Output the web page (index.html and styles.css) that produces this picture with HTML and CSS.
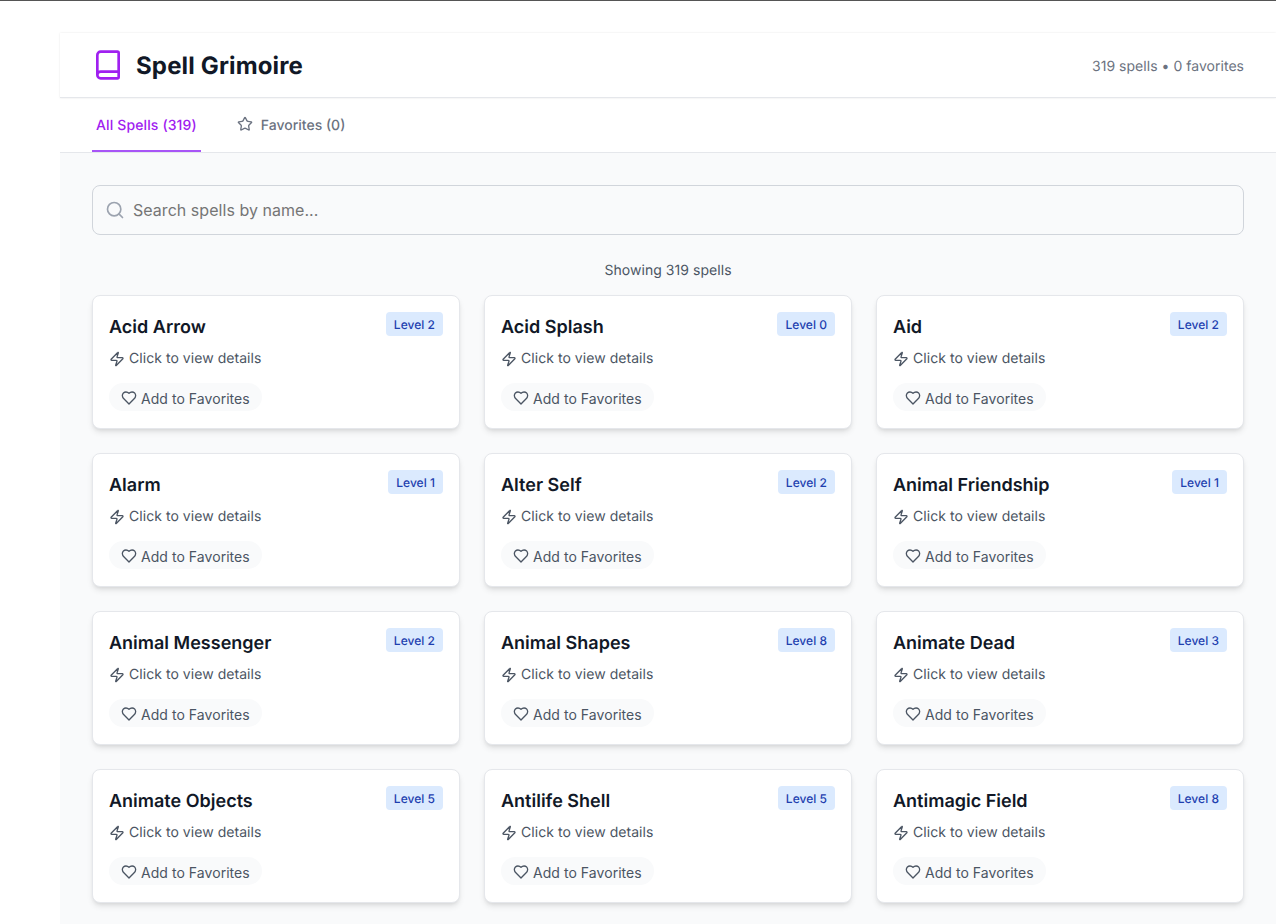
FILE: index.html
```html
<!DOCTYPE html>
<html lang="en">
<head>
    <meta charset="UTF-8">
    <meta name="viewport" content="width=device-width, initial-scale=1.0">
    <title>Spell Grimoire</title>
    <link rel="stylesheet" href="styles.css">
</head>
<body>
    <svg class="icon-defs" width="0" height="0" aria-hidden="true">
        <symbol id="i-zap" viewBox="0 0 24 24"><path d="M4 14a1 1 0 0 1-.78-1.63l9.9-10.2a.5.5 0 0 1 .86.46l-1.92 6.02A1 1 0 0 0 13 10h7a1 1 0 0 1 .78 1.63l-9.9 10.2a.5.5 0 0 1-.86-.46l1.92-6.02A1 1 0 0 0 11 14z"/></symbol>
        <symbol id="i-heart" viewBox="0 0 24 24"><path d="M19 14c1.49-1.46 3-3.21 3-5.5A5.5 5.5 0 0 0 16.5 3c-1.76 0-3 .5-4.5 2-1.5-1.5-2.74-2-4.5-2A5.5 5.5 0 0 0 2 8.5c0 2.3 1.5 4.05 3 5.5l7 7Z"/></symbol>
    </svg>

    <div class="app">
        <header class="header">
            <div class="brand">
                <svg class="book-icon" viewBox="0 0 24 24"><path d="M4 19.5v-15A2.5 2.5 0 0 1 6.5 2H19a1 1 0 0 1 1 1v18a1 1 0 0 1-1 1H6.5a1 1 0 0 1 0-5H20"/></svg>
                <h1>Spell Grimoire</h1>
            </div>
            <p class="stats">319 spells • 0 favorites</p>
        </header>

        <nav class="tabs">
            <a class="tab active">All Spells (319)</a>
            <a class="tab">
                <svg class="tab-icon" viewBox="0 0 24 24"><path d="M11.525 2.295a.53.53 0 0 1 .95 0l2.31 4.679a2.123 2.123 0 0 0 1.595 1.16l5.166.756a.53.53 0 0 1 .294.904l-3.736 3.638a2.123 2.123 0 0 0-.611 1.878l.882 5.14a.53.53 0 0 1-.771.56l-4.618-2.428a2.122 2.122 0 0 0-1.973 0L6.396 21.01a.53.53 0 0 1-.77-.56l.881-5.139a2.122 2.122 0 0 0-.611-1.879L2.16 9.795a.53.53 0 0 1 .294-.906l5.165-.755a2.122 2.122 0 0 0 1.597-1.16z"/></svg>
                Favorites (0)
            </a>
        </nav>

        <main class="content">
            <div class="search">
                <svg class="search-icon" viewBox="0 0 24 24"><circle cx="11" cy="11" r="8"/><path d="m21 21-4.3-4.3"/></svg>
                <input type="text" placeholder="Search spells by name...">
            </div>
            <p class="showing">Showing 319 spells</p>

            <div class="grid">
                <div class="card">
                    <div class="card-top"><h3>Acid Arrow</h3><span class="level">Level 2</span></div>
                    <p class="hint"><svg class="small-icon"><use href="#i-zap"/></svg>Click to view details</p>
                    <button class="fav"><svg class="small-icon"><use href="#i-heart"/></svg>Add to Favorites</button>
                </div>
                <div class="card">
                    <div class="card-top"><h3>Acid Splash</h3><span class="level">Level 0</span></div>
                    <p class="hint"><svg class="small-icon"><use href="#i-zap"/></svg>Click to view details</p>
                    <button class="fav"><svg class="small-icon"><use href="#i-heart"/></svg>Add to Favorites</button>
                </div>
                <div class="card">
                    <div class="card-top"><h3>Aid</h3><span class="level">Level 2</span></div>
                    <p class="hint"><svg class="small-icon"><use href="#i-zap"/></svg>Click to view details</p>
                    <button class="fav"><svg class="small-icon"><use href="#i-heart"/></svg>Add to Favorites</button>
                </div>
                <div class="card">
                    <div class="card-top"><h3>Alarm</h3><span class="level">Level 1</span></div>
                    <p class="hint"><svg class="small-icon"><use href="#i-zap"/></svg>Click to view details</p>
                    <button class="fav"><svg class="small-icon"><use href="#i-heart"/></svg>Add to Favorites</button>
                </div>
                <div class="card">
                    <div class="card-top"><h3>Alter Self</h3><span class="level">Level 2</span></div>
                    <p class="hint"><svg class="small-icon"><use href="#i-zap"/></svg>Click to view details</p>
                    <button class="fav"><svg class="small-icon"><use href="#i-heart"/></svg>Add to Favorites</button>
                </div>
                <div class="card">
                    <div class="card-top"><h3>Animal Friendship</h3><span class="level">Level 1</span></div>
                    <p class="hint"><svg class="small-icon"><use href="#i-zap"/></svg>Click to view details</p>
                    <button class="fav"><svg class="small-icon"><use href="#i-heart"/></svg>Add to Favorites</button>
                </div>
                <div class="card">
                    <div class="card-top"><h3>Animal Messenger</h3><span class="level">Level 2</span></div>
                    <p class="hint"><svg class="small-icon"><use href="#i-zap"/></svg>Click to view details</p>
                    <button class="fav"><svg class="small-icon"><use href="#i-heart"/></svg>Add to Favorites</button>
                </div>
                <div class="card">
                    <div class="card-top"><h3>Animal Shapes</h3><span class="level">Level 8</span></div>
                    <p class="hint"><svg class="small-icon"><use href="#i-zap"/></svg>Click to view details</p>
                    <button class="fav"><svg class="small-icon"><use href="#i-heart"/></svg>Add to Favorites</button>
                </div>
                <div class="card">
                    <div class="card-top"><h3>Animate Dead</h3><span class="level">Level 3</span></div>
                    <p class="hint"><svg class="small-icon"><use href="#i-zap"/></svg>Click to view details</p>
                    <button class="fav"><svg class="small-icon"><use href="#i-heart"/></svg>Add to Favorites</button>
                </div>
                <div class="card">
                    <div class="card-top"><h3>Animate Objects</h3><span class="level">Level 5</span></div>
                    <p class="hint"><svg class="small-icon"><use href="#i-zap"/></svg>Click to view details</p>
                    <button class="fav"><svg class="small-icon"><use href="#i-heart"/></svg>Add to Favorites</button>
                </div>
                <div class="card">
                    <div class="card-top"><h3>Antilife Shell</h3><span class="level">Level 5</span></div>
                    <p class="hint"><svg class="small-icon"><use href="#i-zap"/></svg>Click to view details</p>
                    <button class="fav"><svg class="small-icon"><use href="#i-heart"/></svg>Add to Favorites</button>
                </div>
                <div class="card">
                    <div class="card-top"><h3>Antimagic Field</h3><span class="level">Level 8</span></div>
                    <p class="hint"><svg class="small-icon"><use href="#i-zap"/></svg>Click to view details</p>
                    <button class="fav"><svg class="small-icon"><use href="#i-heart"/></svg>Add to Favorites</button>
                </div>
            </div>
        </main>
    </div>
</body>
</html>
```

FILE: styles.css
```css
html, body {
    height: 100%;
}
body {
    margin: 0;
    background: #fff;
    border-top: 1px solid #555;
    box-sizing: border-box;
    overflow: hidden;
    font-family: Inter, "Liberation Sans", sans-serif;
    color: #111827;
    text-rendering: geometricPrecision;
}
h1, h3, p {
    margin: 0;
}
svg {
    fill: none;
    stroke: currentColor;
    stroke-width: 2;
    stroke-linecap: round;
    stroke-linejoin: round;
    flex-shrink: 0;
}
.icon-defs {
    position: absolute;
}
.app {
    margin-left: 60px;
    padding-top: 32px;
    height: 100%;
    box-sizing: border-box;
    display: flex;
    flex-direction: column;
}
.header {
    flex-shrink: 0;
    height: 64px;
    padding: 0 32px;
    display: flex;
    align-items: center;
    justify-content: space-between;
    border-bottom: 1px solid #e5e7eb;
    box-shadow: 0 0 2px rgba(0,0,0,0.1);
}
.brand {
    display: flex;
    align-items: center;
    gap: 12px;
}
.book-icon {
    width: 32px;
    height: 32px;
    color: #a020f0;
}
h1 {
    padding-top: 2px;
    font-size: 24px;
    line-height: 32px;
    font-weight: 700;
    letter-spacing: 0.15px;
}
.stats {
    padding-top: 4px;
    font-size: 14px;
    line-height: 20px;
    letter-spacing: 0.03px;
    color: #6b7280;
}
.tabs {
    flex-shrink: 0;
    height: 54px;
    padding: 0 32px;
    display: flex;
    gap: 32px;
    border-bottom: 1px solid #e5e7eb;
}
.tab {
    display: flex;
    align-items: center;
    gap: 8px;
    padding: 2px 4px 0;
    font-size: 14px;
    font-weight: 500;
    color: #6b7280;
    border-bottom: 2px solid transparent;
}
.tab.active {
    letter-spacing: 0.13px;
    color: #a020f0;
    border-bottom-color: #a855f7;
}
.tab-icon {
    width: 16px;
    height: 16px;
    margin-top: -2px;
}
.content {
    flex: 1;
    background: #f9fafb;
    padding: 32px;
}
.search {
    height: 50px;
    box-sizing: border-box;
    display: flex;
    align-items: center;
    gap: 8px;
    padding: 0 12px;
    border: 1px solid #d1d5db;
    border-radius: 8px;
}
.search-icon {
    width: 20px;
    height: 20px;
    color: #9ca3af;
}
.search input {
    flex: 1;
    border: none;
    outline: none;
    padding: 1px 0;
    background: transparent;
    font-family: inherit;
    font-size: 16px;
    letter-spacing: 0.04px;
    color: #111827;
}
.search input::placeholder {
    color: #757575;
}
.showing {
    margin: 26px 0 14px;
    text-align: center;
    font-size: 14px;
    line-height: 20px;
    letter-spacing: 0.05px;
    color: #4b5563;
}
.grid {
    display: grid;
    grid-template-columns: repeat(3, 1fr);
    gap: 24px;
}
.card {
    height: 134px;
    box-sizing: border-box;
    padding: 16px;
    background: #fff;
    border: 1px solid #e5e7eb;
    border-radius: 8px;
    box-shadow: 0 4px 6px -1px rgba(0,0,0,0.1), 0 2px 4px -2px rgba(0,0,0,0.1);
}
.card-top {
    display: flex;
    align-items: flex-start;
    justify-content: space-between;
    height: 29px;
}
h3 {
    padding-top: 2px;
    font-size: 18px;
    line-height: 28px;
    font-weight: 600;
}
.level {
    padding: 5px 8px 3px;
    font-size: 12px;
    line-height: 16px;
    font-weight: 500;
    letter-spacing: 0.03px;
    color: #1e40af;
    background: #dbeafe;
    border-radius: 4px;
}
.small-icon {
    width: 16px;
    height: 16px;
}
.hint {
    margin-top: 8px;
    display: flex;
    align-items: center;
    gap: 4px;
    font-size: 14px;
    line-height: 20px;
    letter-spacing: 0.05px;
    color: #4b5563;
}
.fav {
    margin-top: 14px;
    height: 28px;
    padding: 2px 12px 0;
    display: inline-flex;
    align-items: center;
    gap: 4px;
    border: none;
    border-radius: 9999px;
    background: #f9fafb;
    font-family: inherit;
    font-size: 14px;
    letter-spacing: 0.05px;
    color: #4b5563;
}
```
